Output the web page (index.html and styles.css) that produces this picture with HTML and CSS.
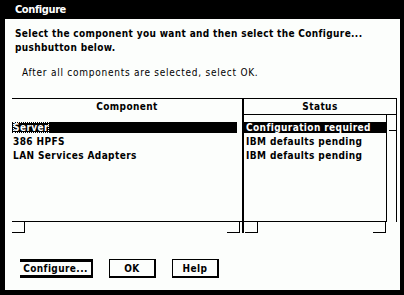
FILE: index.html
```html
<!DOCTYPE html>
<html lang="en">
<head>
    <meta charset="UTF-8">
    <title>Configure</title>
    <link rel="stylesheet" href="styles.css">
</head>
<body>
    <div class="window">
        <div class="titlebar">Configure</div>
        <p class="intro">Select the component you want and then select the Configure...<br>pushbutton below.</p>
        <p class="note">After all components are selected, select OK.</p>

        <div class="lists">
            <div class="col col-component">
                <div class="col-head">Component</div>
                <div class="col-body">
                    <ul class="rows">
                        <li class="selected"><span class="cursor">Server</span></li>
                        <li>386 HPFS</li>
                        <li>LAN Services Adapters</li>
                    </ul>
                </div>
                <div class="hscroll"><span class="corner"></span><span class="corner"></span></div>
            </div>
            <div class="col col-status">
                <div class="col-head">Status</div>
                <div class="col-body">
                    <ul class="rows">
                        <li class="selected">Configuration required</li>
                        <li>IBM defaults pending</li>
                        <li>IBM defaults pending</li>
                    </ul>
                    <div class="vscroll"><span class="arrow"></span></div>
                </div>
                <div class="hscroll"><span class="corner"></span><span class="corner"></span></div>
            </div>
        </div>

        <div class="buttons">
            <button class="btn default">Configure...</button>
            <button class="btn">OK</button>
            <button class="btn">Help</button>
        </div>
    </div>
</body>
</html>
```

FILE: styles.css
```css
body {
    margin: 0;
    font-family: "DejaVu Sans Condensed", "DejaVu Sans", sans-serif;
    font-stretch: condensed;
    font-size: 10px;
    color: #000;
}
.window {
    width: 404px;
    height: 295px;
    box-sizing: border-box;
    border-style: solid;
    border-color: #000;
    border-width: 0 4px 5px 5px;
    background: #fcfefc;
}
.titlebar {
    height: 19px;
    line-height: 19px;
    margin-left: -5px;
    margin-right: -4px;
    padding-left: 15px;
    background: #000;
    color: #fff;
    font-size: 11px;
    font-weight: bold;
    letter-spacing: -0.4px;
}
.intro {
    margin: 8px 0 0 10px;
    line-height: 14px;
    font-weight: bold;
    letter-spacing: 0.35px;
}
.note {
    margin: 11px 0 0 17px;
    line-height: 14px;
    letter-spacing: 0.75px;
}
.lists {
    display: flex;
    width: 385px;
    margin: 18px 0 0 7px;
    border-top: 1px solid #000;
    font-weight: bold;
    letter-spacing: 0.4px;
}
.col {
    display: flex;
    flex-direction: column;
}
.col-component {
    width: 230px;
    border-right: 2px solid #000;
}
.col-status {
    flex: 1;
}
.col-head {
    height: 16px;
    line-height: 16px;
    text-align: center;
}
.col-status .col-head {
    height: 15px;
    border-bottom: 1px solid #000;
    border-right: 1px solid #000;
}
.col-body {
    display: flex;
    height: 107px;
}
.rows {
    flex: 1;
    list-style: none;
    margin: 0;
    padding: 7px 0 0;
    border-bottom: 1px solid #000;
}
.rows li {
    height: 11px;
    line-height: 11px;
    margin-bottom: 3px;
    white-space: nowrap;
}
.col-component .rows li {
    margin-right: 5px;
    padding-left: 1px;
}
.col-status .rows {
    border-right: 1px solid #000;
}
.col-status .rows li {
    padding-left: 2px;
}
.rows li.selected {
    background: #000;
    color: #fff;
}
.cursor {
    outline: 1px dotted #fff;
    outline-offset: -1px;
}
.vscroll {
    width: 9px;
    border-right: 1px solid #000;
}
.arrow {
    display: block;
    height: 8px;
    margin: 7px 0 0 2px;
    border-bottom: 1px solid #000;
}
.hscroll {
    display: flex;
    justify-content: space-between;
    height: 11px;
}
.corner {
    width: 12px;
    height: 10px;
    border-right: 1px solid #000;
    border-bottom: 1px solid #000;
}
.col-component .hscroll {
    padding-right: 2px;
}
.col-status .hscroll {
    padding: 0 11px 0 1px;
}
.buttons {
    display: flex;
    gap: 16px;
    margin: 26px 0 0 15px;
}
.btn {
    box-sizing: border-box;
    width: 47px;
    height: 19px;
    padding: 0;
    background: #fcfefc;
    border: 1px solid #000;
    border-right-width: 2px;
    border-bottom-width: 2px;
    font: inherit;
    font-weight: bold;
    letter-spacing: 0.4px;
    color: #000;
}
.btn.default {
    width: 73px;
    border-width: 3px 2px 3px 0;
}
```
